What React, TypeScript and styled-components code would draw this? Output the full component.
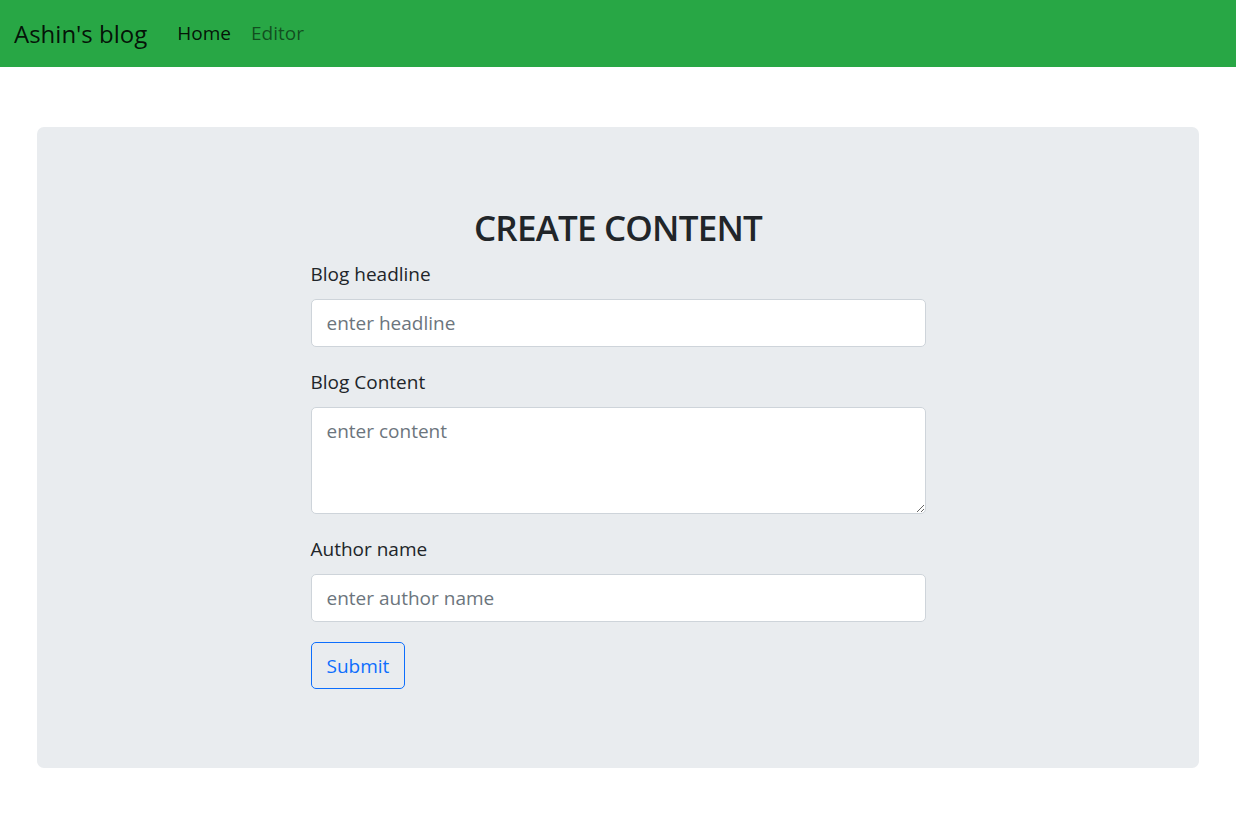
import React from "react";
import styled, { createGlobalStyle } from "styled-components";

const GlobalStyle = createGlobalStyle`
  * { box-sizing: border-box; }
  body {
    margin: 0;
    background: #ffffff;
    color: #212529;
    font-family: "Open Sans", "Noto Sans", sans-serif;
  }
`;

const NavBar = styled.nav`
  height: 67px;
  background: #28a745;
  display: flex;
  align-items: center;
  padding: 0 14px;
`;

const Brand = styled.a`
  font-size: 24px;
  color: rgba(0, 0, 0, 0.9);
  text-decoration: none;
  margin-right: 20px;
  line-height: 1.5;
`;

const NavList = styled.div`
  display: flex;
  align-items: center;
`;

const NavLink = styled.a<{ $active?: boolean }>`
  font-size: 19px;
  padding: 0 10px;
  line-height: 1.5;
  text-decoration: none;
  color: ${(p) => (p.$active ? "rgba(0,0,0,0.9)" : "rgba(0,0,0,0.55)")};
`;

const Main = styled.main`
  padding: 60px 37px 0;
`;

const Jumbotron = styled.section`
  background: #e9ecef;
  border-radius: 7px;
  padding: 79px 0 79px;
  display: flex;
  justify-content: center;
`;

const Form = styled.form`
  width: 615px;
  display: flex;
  flex-direction: column;
`;

const Title = styled.h1`
  margin: 0 0 9px;
  text-align: center;
  font-size: 35px;
  font-weight: 600;
  letter-spacing: -0.8px;
  line-height: 44px;
  color: #212529;
`;

const Group = styled.div`
  display: flex;
  flex-direction: column;
  margin-bottom: 20px;
`;

const Label = styled.label`
  font-size: 19px;
  line-height: 30px;
  margin-bottom: 10px;
  color: #212529;
`;

const fieldStyles = `
  width: 100%;
  font-family: "Open Sans", "Noto Sans", sans-serif;
  font-size: 19px;
  line-height: 30px;
  color: #212529;
  background: #ffffff;
  border: 1px solid #ced4da;
  border-radius: 5px;
  padding: 7.5px 15px;
  outline: none;
  &::placeholder { color: #6c757d; opacity: 1; }
`;

const Input = styled.input`
  ${fieldStyles}
  height: 48px;
`;

const TextArea = styled.textarea`
  ${fieldStyles}
  height: 107px;
  display: block;
  resize: vertical;
`;

const SubmitButton = styled.button`
  align-self: flex-start;
  font-family: "Open Sans", "Noto Sans", sans-serif;
  font-size: 19px;
  line-height: 30px;
  height: 47px;
  padding: 7.5px 15px;
  background: transparent;
  color: #0d6efd;
  border: 1px solid #0d6efd;
  border-radius: 5px;
  cursor: pointer;
`;

export default function App() {
  return (
    <>
      <GlobalStyle />
      <NavBar>
        <Brand href="#">Ashin's blog</Brand>
        <NavList>
          <NavLink href="#" $active>Home</NavLink>
          <NavLink href="#">Editor</NavLink>
        </NavList>
      </NavBar>
      <Main>
        <Jumbotron>
          <Form onSubmit={(e) => e.preventDefault()}>
            <Title>CREATE CONTENT</Title>
            <Group>
              <Label>Blog headline</Label>
              <Input placeholder="enter headline" />
            </Group>
            <Group>
              <Label>Blog Content</Label>
              <TextArea placeholder="enter content" />
            </Group>
            <Group>
              <Label>Author name</Label>
              <Input placeholder="enter author name" />
            </Group>
            <SubmitButton type="submit">Submit</SubmitButton>
          </Form>
        </Jumbotron>
      </Main>
    </>
  );
}
